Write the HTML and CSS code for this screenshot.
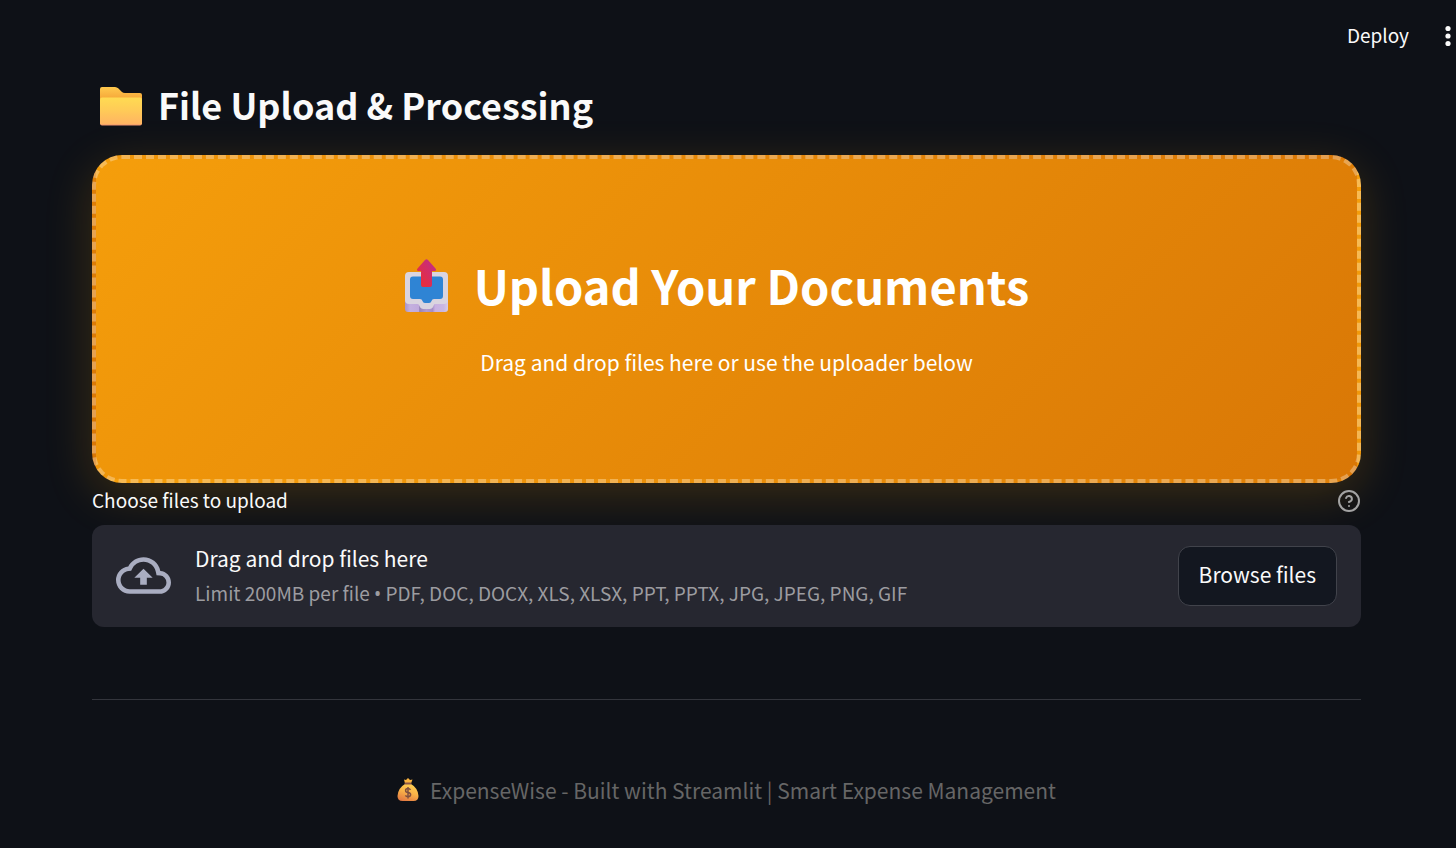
FILE: index.html
```html
<!DOCTYPE html>
<html lang="en">
<head>
<meta charset="utf-8">
<title>ExpenseWise</title>
<link rel="stylesheet" href="styles.css">
</head>
<body>
<header class="toolbar">
  <button class="deploy" type="button">Deploy</button>
  <button class="menu" type="button" aria-label="Main menu">
    <svg width="6" height="22" viewBox="0 0 6 22" fill="currentColor"><circle cx="3" cy="3.5" r="2.6"/><circle cx="3" cy="11" r="2.6"/><circle cx="3" cy="18.500" r="2.6"/></svg>
  </button>
</header>
<main class="page">
  <h1 class="heading">
    <svg class="folder" width="42" height="40" viewBox="0 0 42 40" aria-hidden="true">
      <defs>
        <linearGradient id="tab" x1="0" y1="0" x2="0" y2="1"><stop offset="0" stop-color="#ffc94d"/><stop offset=".4" stop-color="#f6a93b"/></linearGradient>
        <linearGradient id="front" x1="0" y1="0" x2="0" y2="1"><stop offset="0" stop-color="#ffdb52"/><stop offset=".45" stop-color="#ffcb57"/><stop offset=".93" stop-color="#ffb562"/><stop offset="1" stop-color="#ef9270"/></linearGradient>
      </defs>
      <path fill="url(#tab)" d="M2 1h13q2 0 3.500 1.500l3.500 3.500q1 1 3 1h15q2 0 2 2v20H0V3q0-2 2-2z"/>
      <path fill="url(#front)" d="M2 11.500h38q2 0 2 2v24q0 2-2 2H2q-2 0-2-2v-24q0-2 2-2z"/>
    </svg>
    <span>File Upload &amp; Processing</span>
  </h1>
  <section class="hero">
    <h2 class="hero-title">
      <svg class="outbox" width="44" height="54" viewBox="0 0 44 54" aria-hidden="true">
        <defs>
          <linearGradient id="base" x1="0" y1="0" x2="1" y2="0"><stop offset="0" stop-color="#a995c8"/><stop offset=".12" stop-color="#c4b0df"/><stop offset=".32" stop-color="#c0a9dc"/><stop offset=".34" stop-color="#9783b7"/><stop offset=".5" stop-color="#b39bd0"/><stop offset=".64" stop-color="#a58dc5"/><stop offset=".7" stop-color="#c8b0e2"/><stop offset=".9" stop-color="#c9b7e1"/><stop offset="1" stop-color="#d8cbe4"/></linearGradient>
          <linearGradient id="arrow" x1="0" y1="1" x2="1" y2="0"><stop offset=".2" stop-color="#e72e3d"/><stop offset="1" stop-color="#bd2c91"/></linearGradient>
        </defs>
        <path fill="url(#base)" d="M1 36h43v14q0 3-3 3H4q-3 0-3-3z"/>
        <path fill="#dad4df" d="M5 13h35q4 0 4 4v24q0 4-4 4H31q-1 0-1.500 2-1 3-4 3h-6q-3 0-4-3-.5-2-2-2H5q-4 0-4-4V17q0-4 4-4z"/>
        <path fill="#2f84d4" d="M9 17.500h27q3 0 3 3V37q0 3-3 3h-6q-2 0-2.500 2-.5 2-2.500 2h-4q-2 0-2.500-2-.5-2-2.500-2H9q-3 0-3-3V20.500q0-3 3-3z"/>
        <path fill="url(#arrow)" d="M21 1q1.500-1.500 3 0l7.500 8.500q1.500 2.500-1 2.500H28v14q0 2-2 2h-7q-2 0-2-2V12h-2.500q-2.500 0-1-2.500z"/>
      </svg>
      <span>Upload Your Documents</span>
    </h2>
    <p class="hero-text">Drag and drop files here or use the uploader below</p>
  </section>
  <section class="uploader">
    <div class="label-row">
      <label for="files">Choose files to upload</label>
      <button class="help" type="button" aria-label="Help">
        <svg width="24" height="24" viewBox="0 0 24 24" fill="none" stroke="currentColor" stroke-width="2" stroke-linecap="round" stroke-linejoin="round"><circle cx="12" cy="12" r="10"/><path d="M9.090 9a3 3 0 0 1 5.830 1c0 2-3 3-3 3"/><path d="M12 17h.01"/></svg>
      </button>
    </div>
    <div class="dropzone">
      <svg class="cloud" width="55" height="55" viewBox="0 0 24 24" fill="currentColor" aria-hidden="true"><path d="M19.350 10.040A7.490 7.490 0 0 0 12 4C9.110 4 6.600 5.640 5.350 8.040A5.994 5.994 0 0 0 0 14c0 3.310 2.690 6 6 6h13c2.760 0 5-2.240 5-5 0-2.640-2.050-4.780-4.650-4.960zM19 18H6c-2.210 0-4-1.790-4-4 0-2.050 1.530-3.760 3.560-3.970l1.070-.11.5-.95A5.469 5.469 0 0 1 12 6c2.620 0 4.880 1.860 5.390 4.430l.3 1.500 1.530.11A2.980 2.980 0 0 1 22 15c0 1.650-1.350 3-3 3zM8 13h2.550v3h2.900v-3H16l-4-4z"/></svg>
      <div class="drop-text">
        <span class="drop-title">Drag and drop files here</span>
        <small class="drop-limit">Limit 200MB per file <span class="bullet">•</span> PDF, DOC, DOCX, XLS, XLSX, PPT, PPTX, JPG, JPEG, PNG, GIF</small>
      </div>
      <button class="browse" id="files" type="button">Browse files</button>
    </div>
  </section>
  <hr class="rule">
  <footer class="footer">
    <svg width="22" height="26" viewBox="0 0 22 26" aria-hidden="true">
      <defs><linearGradient id="bag" x1=".7" y1="0" x2=".3" y2="1"><stop offset="0" stop-color="#ffd052"/><stop offset=".5" stop-color="#f9b248"/><stop offset="1" stop-color="#e27a42"/></linearGradient></defs>
      <path fill="#fbb43f" d="M7 2.500 9 3l2-2 2 2 2.500-.5L14 6.500H8z"/>
      <path fill="url(#bag)" d="M8 7h6q7 4 7.500 12 0 5-5 5h-11q-5 0-5-5Q1 11 8 7z"/>
      <rect x="7.500" y="5.500" width="7" height="2" rx="1" fill="#8c5646"/>
      <path d="M13.500 12.800q-.8-1.300-2.500-1.300-2.400 0-2.400 2t2.400 2.100q2.600.4 2.600 2.200t-2.600 1.900q-1.900 0-2.600-1.400M11 10v11.500" fill="none" stroke="#80503f" stroke-width="1.500"/>
    </svg>
    <span>ExpenseWise - Built with Streamlit | Smart Expense Management</span>
  </footer>
</main>
</body>
</html>
```
FILE: styles.css
```css
* { box-sizing: border-box; }
body {
  margin: 0;
  background: #0e1117;
  color: #fafafa;
  font-family: "Noto Sans CJK SC", "Noto Sans", sans-serif;
  font-size: 21px;
  line-height: 36px;
}
button { font: inherit; color: inherit; cursor: pointer; }
.toolbar {
  display: flex;
  justify-content: flex-end;
  align-items: center;
  gap: 36px;
  height: 72px;
  padding-right: 5px;
}
.deploy, .menu, .help { padding: 0; border: 0; background: none; }
.deploy { padding-bottom: 2px; font-size: 19px; }
.menu, .help { display: flex; }
.page { padding: 0 95px 0 92px; }
.heading {
  display: flex;
  align-items: center;
  gap: 16px;
  margin: 0;
  padding: 9px 0 24px 8px;
  font-size: 36px;
  line-height: 50px;
  font-weight: 700;
}
.heading span { padding-bottom: 4px; line-height: 46px; }
.hero {
  display: flex;
  flex-direction: column;
  align-items: center;
  gap: 20px;
  padding: 91px 32px 97px;
  border: 4px dashed rgba(255, 255, 255, 0.3);
  border-radius: 30px;
  background: linear-gradient(135deg, #f59e0b 0%, #d97706 100%);
  box-shadow: 0 12px 48px rgba(245, 158, 11, 0.2);
  color: #fff;
  text-align: center;
}
.hero-title {
  display: flex;
  align-items: center;
  gap: 26px;
  margin: 0;
  padding-right: 20px;
  font-size: 47px;
  line-height: 72px;
  font-weight: 700;
}
.hero-title span { padding-bottom: 2px; line-height: 70px; }
.hero-text { margin: 0; line-height: 40px; }
.label-row {
  display: flex;
  justify-content: space-between;
  align-items: center;
  height: 42px;
  padding-bottom: 6px;
  font-size: 19px;
}
.label-row label { padding-bottom: 2px; }
.help { color: #a3a3a3; }
.dropzone {
  display: flex;
  align-items: center;
  gap: 24px;
  padding: 15px 24px 17px;
  border-radius: 12px;
  background: #262730;
}
.cloud { flex: none; color: #a9adc1; }
.drop-text { display: flex; flex: 1; flex-direction: column; }
.drop-title { line-height: 36px; }
.drop-limit { font-size: 19px; line-height: 34px; color: #9c9ca0; }
.bullet { font-family: "Noto Sans", sans-serif; line-height: 1; }
.browse {
  height: 60px;
  margin-top: 2px;
  padding: 0 20px 4px;
  border: 1px solid #41434b;
  border-radius: 12px;
  background: #131720;
}
.rule { margin: 72px 0; border: 0; border-top: 1px solid #33353c; }
.footer {
  display: flex;
  justify-content: center;
  align-items: center;
  gap: 11px;
  color: #666;
}
```
